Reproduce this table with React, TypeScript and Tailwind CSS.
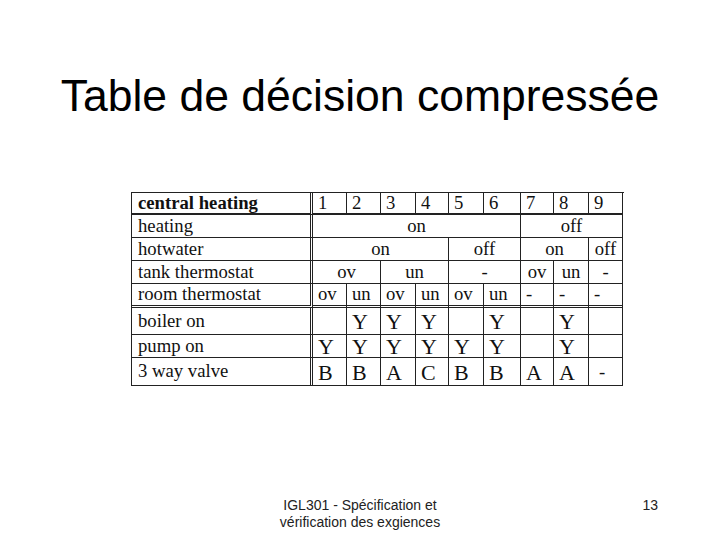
import React from "react";

type C = { t: string; s: number; a: "l" | "c" | "m"; big?: boolean };
type R = { label: string; bold?: boolean; h: string; b: string; cells: C[] };

const spanCls: Record<number, string> = {
  1: "col-span-1",
  2: "col-span-2",
  3: "col-span-3",
  4: "col-span-4",
  5: "col-span-5",
  6: "col-span-6",
};

const one = (t: string, big = false, a: "l" | "c" | "m" = "l"): C => ({ t, s: 1, a, big });

const rows: R[] = [
  {
    label: "central heating",
    bold: true,
    h: "h-[22px]",
    b: "border-b-2",
    cells: ["1", "2", "3", "4", "5", "6", "7", "8", "9"].map((t) => one(t)),
  },
  {
    label: "heating",
    h: "h-[23px]",
    b: "border-b",
    cells: [
      { t: "on", s: 6, a: "c" },
      { t: "off", s: 3, a: "c" },
    ],
  },
  {
    label: "hotwater",
    h: "h-[23px]",
    b: "border-b",
    cells: [
      { t: "on", s: 4, a: "c" },
      { t: "off", s: 2, a: "c" },
      { t: "on", s: 2, a: "c" },
      { t: "off", s: 1, a: "c" },
    ],
  },
  {
    label: "tank thermostat",
    h: "h-[23px]",
    b: "border-b",
    cells: [
      { t: "ov", s: 2, a: "c" },
      { t: "un", s: 2, a: "c" },
      { t: "-", s: 2, a: "c" },
      { t: "ov", s: 1, a: "c" },
      { t: "un", s: 1, a: "c" },
      { t: "-", s: 1, a: "c" },
    ],
  },
  {
    label: "room thermostat",
    h: "h-[24px]",
    b: "border-b-[3px] [border-bottom-style:double]",
    cells: ["ov", "un", "ov", "un", "ov", "un", "-", "-", "-"].map((t) => one(t)),
  },
  {
    label: "boiler on",
    h: "h-[27px]",
    b: "border-b",
    cells: ["", "Y", "Y", "Y", "", "Y", "", "Y", ""].map((t) => one(t, true)),
  },
  {
    label: "pump on",
    h: "h-[23px]",
    b: "border-b",
    cells: ["Y", "Y", "Y", "Y", "Y", "Y", "", "Y", ""].map((t) => one(t, true)),
  },
  {
    label: "3 way valve",
    h: "h-[28px]",
    b: "border-b",
    cells: [
      ...["B", "B", "A", "C", "B", "B", "A", "A"].map((t) => one(t, true)),
      one("-", false, "m"),
    ],
  },
];

export default function App() {
  return (
    <div className="relative flex h-[540px] w-[720px] flex-col bg-white text-[#111]">
      <div
        className="pt-[74px] text-center text-[44.5px] leading-[44px] text-black"
        style={{ fontFamily: '"Liberation Sans", Arial, sans-serif' }}
      >
        Table de décision compressée
      </div>

      <div className="mt-[74px] ml-[131px]">
        <div
          className="grid w-[493px] grid-cols-[181px_34px_34px_35px_33px_35px_37px_33px_35px_34px] border-t border-l border-[#222] text-[18.7px] leading-none"
          style={{ fontFamily: '"Liberation Serif", "Times New Roman", serif' }}
        >
          {rows.map((r, ri) => (
            <React.Fragment key={ri}>
              <div
                className={`flex items-center border-r-[3px] border-[#222] pl-[6px] [border-right-style:double] ${r.h} ${r.b} ${
                  r.bold ? "font-bold" : ""
                }`}
              >
                {r.label}
              </div>
              {r.cells.map((c, ci) => (
                <div
                  key={ci}
                  className={`flex items-center border-r border-[#222] ${spanCls[c.s]} ${r.h} ${r.b} ${
                    c.a === "c" ? "justify-center" : c.a === "m" ? "pl-[10px] pt-[2px]" : "pl-[5px]"
                  } ${c.big ? "pt-[2px] text-[22px]" : ""}`}
                >
                  {c.t}
                </div>
              ))}
            </React.Fragment>
          ))}
        </div>
      </div>

      <div
        className="mt-[111px] grid grid-cols-[1fr_auto_1fr] text-[14px] leading-[17px] text-[#222]"
        style={{ fontFamily: '"Liberation Sans", Arial, sans-serif' }}
      >
        <div />
        <div className="text-center">
          IGL301 - Spécification et
          <br />
          vérification des exgiences
        </div>
        <div className="pr-[62px] text-right">13</div>
      </div>
    </div>
  );
}
